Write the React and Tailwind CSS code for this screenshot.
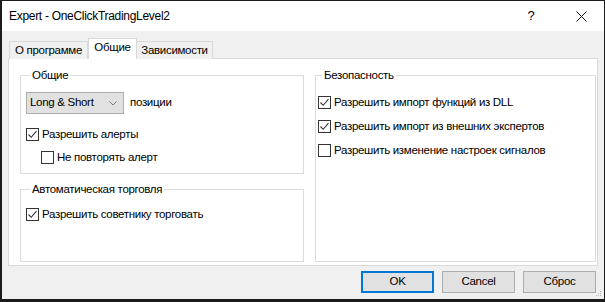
import React from "react";

const font = { fontFamily: '"Liberation Sans", Arial, sans-serif' };

const T = "text-[11.5px] tracking-[-0.3px] text-black";

function Check({ checked }) {
  return (
    <span className="w-[13px] h-[13px] border border-[#333333] bg-white flex items-center justify-center shrink-0">
      {checked && (
        <svg width="11" height="11" viewBox="0 0 11 11">
          <path d="M1.5 5.5 L4.2 8.3 L9.5 2.2" fill="none" stroke="#333333" strokeWidth="1.1" />
        </svg>
      )}
    </span>
  );
}

function Row({ checked, label, className = "" }) {
  return (
    <div className={"flex items-center h-[13px] gap-[3px] " + className}>
      <Check checked={checked} />
      <span className="text-[11.5px] tracking-[-0.3px] leading-[13px] text-black whitespace-nowrap">{label}</span>
    </div>
  );
}

function Group({ title, className = "", children }) {
  return (
    <fieldset className={"border border-[#dcdcdc] min-w-0 " + className}>
      <legend className="ml-[4px] px-[2px] text-[11.5px] tracking-[-0.3px] leading-[14px] text-black">{title}</legend>
      {children}
    </fieldset>
  );
}

export default function App() {
  return (
    <div className="w-[605px] h-[302px] bg-[#1c1c1c] pl-[2px] pr-[2px] pt-[1px] pb-[3px] flex" style={font}>
      <div className="flex-1 flex flex-col bg-[#f0f0f0] relative">
        {/* title bar */}
        <div className="h-[30px] bg-white flex items-center pl-[7px] shrink-0">
          <span className={T + " flex-1 text-[12px]"}>Expert - OneClickTradingLevel2</span>
          <span className="text-[13px] text-black w-[46px] text-center mr-[4px]">?</span>
          <span className="w-[46px] flex justify-center">
            <svg width="11" height="11" viewBox="0 0 11 11">
              <path d="M0.5 0.5 L10.5 10.5 M10.5 0.5 L0.5 10.5" stroke="#111" strokeWidth="1" />
            </svg>
          </span>
        </div>
        {/* body */}
        <div className="flex-1 flex flex-col pl-[6px] pr-[6px] pt-[7px]">
          <div className="flex items-end h-[21px] relative z-10 -mb-px">
            <div className={"ml-[1px] h-[18px] w-[79px] border border-b-0 border-[#d9d9d9] bg-[#f0f0f0] flex items-center justify-center pt-[1px] " + T}>
              О программе
            </div>
            <div className={"h-[21px] w-[49px] border border-b-0 border-[#d9d9d9] bg-white flex items-center justify-center pb-[3px] " + T}>
              Общие
            </div>
            <div className={"h-[18px] w-[76px] border border-b-0 border-l-0 border-[#d9d9d9] bg-[#f0f0f0] flex items-center justify-center pt-[1px] " + T}>
              Зависимости
            </div>
          </div>
          <div className="h-[208px] border border-[#d9d9d9] bg-white flex pl-[11px] pr-[1px] pt-[9px] gap-[11px]">
            <div className="w-[284px] flex flex-col gap-[8px]">
              <Group title="Общие" className="h-[106px] pl-[5px]">
                <div className="mt-[10px] flex items-center gap-[6px]">
                  <div className="w-[98px] h-[22px] bg-[#e1e1e1] border border-[#adadad] flex items-center pl-[3px] pr-[6px]">
                    <span className={T + " flex-1"}>Long &amp; Short</span>
                    <svg width="8" height="5" viewBox="0 0 8 5">
                      <path d="M0.5 0.5 L4 4 L7.5 0.5" fill="none" stroke="#7a7a7a" strokeWidth="1" />
                    </svg>
                  </div>
                  <span className={T}>позиции</span>
                </div>
                <Row className="mt-[14px]" checked label="Разрешить алерты" />
                <Row className="mt-[10px] ml-[15px]" label="Не повторять алерт" />
              </Group>
              <Group title="Автоматическая торговля" className="h-[80px] pl-[5px]">
                <Row className="mt-[12px]" checked label="Разрешить советнику торговать" />
              </Group>
            </div>
            <Group title="Безопасность" className="w-[281px] h-[194px] pl-[2px]">
              <Row className="mt-[14px]" checked label="Разрешить импорт функций из DLL" />
              <Row className="mt-[11px]" checked label="Разрешить импорт из внешних экспертов" />
              <Row className="mt-[11px]" label="Разрешить изменение настроек сигналов" />
            </Group>
          </div>
          <div className="flex justify-end gap-[8px] mt-[5px] pr-[2px]">
            <div className={"w-[73px] h-[22px] border-2 border-[#0078d7] bg-[#e1e1e1] flex items-center justify-center " + T}>OK</div>
            <div className={"w-[73px] h-[22px] border border-[#adadad] bg-[#e1e1e1] flex items-center justify-center " + T}>Cancel</div>
            <div className={"w-[73px] h-[22px] border border-[#adadad] bg-[#e1e1e1] flex items-center justify-center " + T}>Сброс</div>
          </div>
        </div>
        <svg className="absolute right-[2px] bottom-[2px]" width="7" height="7" viewBox="0 0 7 7">
          <rect x="5" y="1" width="1" height="1" fill="#b5b5b5" />
          <rect x="3" y="3" width="1" height="1" fill="#b5b5b5" />
          <rect x="5" y="3" width="1" height="1" fill="#b5b5b5" />
          <rect x="1" y="5" width="1" height="1" fill="#b5b5b5" />
          <rect x="3" y="5" width="1" height="1" fill="#b5b5b5" />
          <rect x="5" y="5" width="1" height="1" fill="#b5b5b5" />
        </svg>
      </div>
    </div>
  );
}
